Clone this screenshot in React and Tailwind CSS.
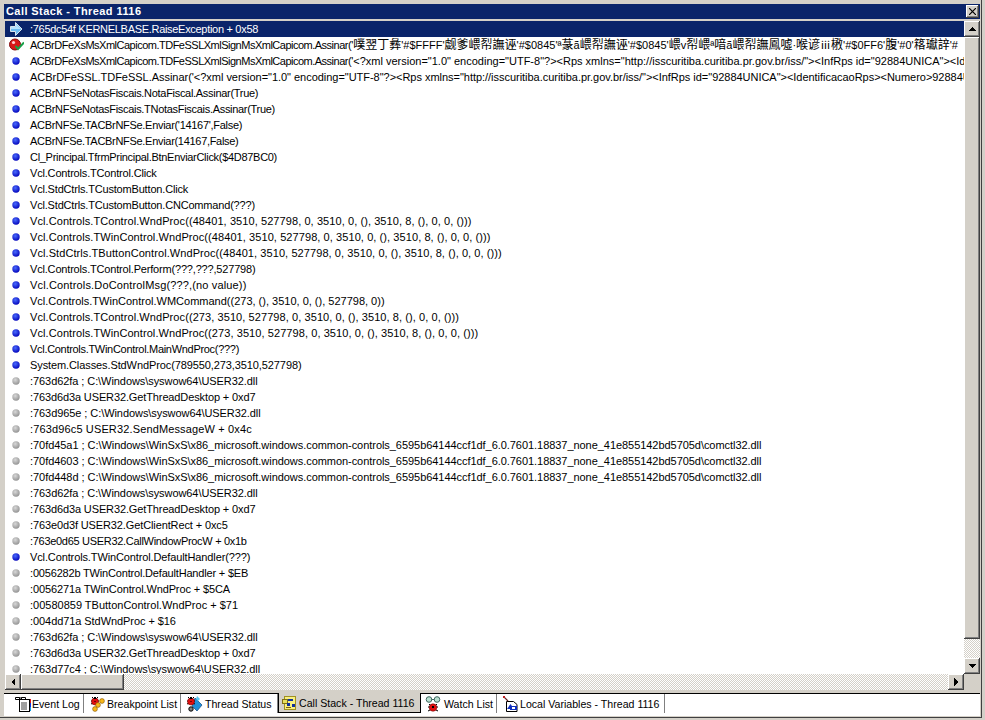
import React from 'react';

const WINSXS = 'C:\\Windows\\WinSxS\\x86_microsoft.windows.common-controls_6595b64144ccf1df_6.0.7601.18837_none_41e855142bd5705d\\comctl32.dll';
const XML = `<?xml version="1.0" encoding="UTF-8"?><Rps xmlns="http://isscuritiba.curitiba.pr.gov.br/iss/"><InfRps id="92884UNICA">`;
const SIGN = "ACBrDFeXsMsXmlCapicom.TDFeSSLXmlSignMsXmlCapicom.Assinar('";

// Tahoma is tighter on capitals and wider on digits than Liberation Sans, so rows get a small spacing fix
const tight = 'tracking-[-0.3px]';
const snug = 'tracking-[-0.18px]';
const loose = 'tracking-[0.08px]';

const rows = [
  ['arrow', ':765dc54f KERNELBASE.RaiseException + 0x58', tight],
  ['check', `'噗翌丁彝'#$FFFF'觑爹㟪㡂譕诬'#$0845'ª蒃ã㟪㡂譕诬'#$0845'㟪v㡂㟪ª喑ã㟪㡂譕鳳噓·喉谚ⅲ㮘'#$0FF6'腹'#0'䈷瓛䛨'#`, '', SIGN.slice(0, -1)],
  ['blue', `'${XML}<IdentificacaoRps>`, '', SIGN.slice(0, -1)],
  ['blue', `ACBrDFeSSL.TDFeSSL.Assinar('${XML}<IdentificacaoRps><Numero>92884UNICA</Numero>`, 'tracking-[-0.03px]'],
  ['blue', 'ACBrNFSeNotasFiscais.NotaFiscal.Assinar(True)', tight],
  ['blue', 'ACBrNFSeNotasFiscais.TNotasFiscais.Assinar(True)', tight],
  ['blue', "ACBrNFSe.TACBrNFSe.Enviar('14167',False)", tight],
  ['blue', 'ACBrNFSe.TACBrNFSe.Enviar(14167,False)', tight],
  ['blue', 'Cl_Principal.TfrmPrincipal.BtnEnviarClick($4D87BC0)', tight],
  ['blue', 'Vcl.Controls.TControl.Click', snug],
  ['blue', 'Vcl.StdCtrls.TCustomButton.Click', snug],
  ['blue', 'Vcl.StdCtrls.TCustomButton.CNCommand(???)', snug],
  ['blue', 'Vcl.Controls.TControl.WndProc((48401, 3510, 527798, 0, 3510, 0, (), 3510, 8, (), 0, 0, ()))', loose],
  ['blue', 'Vcl.Controls.TWinControl.WndProc((48401, 3510, 527798, 0, 3510, 0, (), 3510, 8, (), 0, 0, ()))', loose],
  ['blue', 'Vcl.StdCtrls.TButtonControl.WndProc((48401, 3510, 527798, 0, 3510, 0, (), 3510, 8, (), 0, 0, ()))', loose],
  ['blue', 'Vcl.Controls.TControl.Perform(???,???,527798)', snug],
  ['blue', 'Vcl.Controls.DoControlMsg(???,(no value))', 'tracking-[0.15px]'],
  ['blue', 'Vcl.Controls.TWinControl.WMCommand((273, (), 3510, 0, (), 527798, 0))', ''],
  ['blue', 'Vcl.Controls.TControl.WndProc((273, 3510, 527798, 0, 3510, 0, (), 3510, 8, (), 0, 0, ()))', loose],
  ['blue', 'Vcl.Controls.TWinControl.WndProc((273, 3510, 527798, 0, 3510, 0, (), 3510, 8, (), 0, 0, ()))', loose],
  ['blue', 'Vcl.Controls.TWinControl.MainWndProc(???)', tight],
  ['blue', 'System.Classes.StdWndProc(789550,273,3510,527798)', 'tracking-[-0.1px]'],
  ['gray', ':763d62fa ; C:\\Windows\\syswow64\\USER32.dll', 'tracking-[-0.07px]'],
  ['gray', ':763d6d3a USER32.GetThreadDesktop + 0xd7', 'tracking-[-0.12px]'],
  ['gray', ':763d965e ; C:\\Windows\\syswow64\\USER32.dll', 'tracking-[-0.07px]'],
  ['gray', ':763d96c5 USER32.SendMessageW + 0x4c', 'tracking-[0.14px]'],
  ['gray', `:70fd45a1 ; ${WINSXS}`, 'tracking-[-0.05px]'],
  ['gray', `:70fd4603 ; ${WINSXS}`, 'tracking-[-0.05px]'],
  ['gray', `:70fd448d ; ${WINSXS}`, 'tracking-[-0.05px]'],
  ['gray', ':763d62fa ; C:\\Windows\\syswow64\\USER32.dll', 'tracking-[-0.07px]'],
  ['gray', ':763d6d3a USER32.GetThreadDesktop + 0xd7', 'tracking-[-0.12px]'],
  ['gray', ':763e0d3f USER32.GetClientRect + 0xc5', 'tracking-[-0.12px]'],
  ['gray', ':763e0d65 USER32.CallWindowProcW + 0x1b', tight],
  ['blue', 'Vcl.Controls.TWinControl.DefaultHandler(???)', 'tracking-[-0.12px]'],
  ['gray', ':0056282b TWinControl.DefaultHandler + $EB', snug],
  ['gray', ':0056271a TWinControl.WndProc + $5CA', 'tracking-[-0.12px]'],
  ['gray', ':00580859 TButtonControl.WndProc + $71', ''],
  ['gray', ':004dd71a StdWndProc + $16', 'tracking-[-0.07px]'],
  ['gray', ':763d62fa ; C:\\Windows\\syswow64\\USER32.dll', 'tracking-[-0.07px]'],
  ['gray', ':763d6d3a USER32.GetThreadDesktop + 0xd7', 'tracking-[-0.12px]'],
  ['gray', ':763d77c4 ; C:\\Windows\\syswow64\\USER32.dll', 'tracking-[-0.07px]'],
];

const tabs = [
  { label: 'Event Log', icon: 'log', box: 'w-[80px] pl-[11px] gap-[1px]' },
  { label: 'Breakpoint List', icon: 'breakpoint', box: 'w-[97px] pl-[5px] gap-[2px]' },
  { label: 'Thread Status', icon: 'thread', box: 'w-[97px] pl-[6px] gap-[2px]' },
  { label: 'Call Stack - Thread 1116', icon: 'stack', box: 'w-[143px] pl-[3px] gap-[1px]', active: true },
  { label: 'Watch List', icon: 'watch', box: 'w-[76px] pl-[4px] gap-[3px]' },
  { label: 'Local Variables - Thread 1116', icon: 'locals', box: 'w-[168px] pl-[6px] gap-[1px]' },
];

const raised = 'bg-[#d4d0c8] shadow-[inset_-1px_-1px_0_#404040,inset_1px_1px_0_#ffffff,inset_-2px_-2px_0_#808080]';
const dither = 'bg-[repeating-conic-gradient(#d4d0c8_0_25%,#ffffff_0_50%)] bg-[length:2px_2px]';

function RowIcon({ type }) {
  if (type === 'arrow') {
    return (
      <svg width="16" height="16" viewBox="0 0 16 16">
        <path d="M2.5 5.5h5v-4l6.500 6.500-6.500 6.500v-4h-5z" fill="#6cbcf4" stroke="#d8e4ee" />
        <path d="M3 6h5v-3l5 5h-10z" fill="#b4e2ff" />
      </svg>
    );
  }
  if (type === 'check') {
    return (
      <svg width="16" height="16" viewBox="0 0 16 16">
        <circle cx="7" cy="7.500" r="5.500" fill="#d81818" stroke="#801010" />
        <circle cx="5.500" cy="5.500" r="1.600" fill="#ffd0d0" />
        <path d="M7.500 9l2.500 3 6-6.500" fill="none" stroke="#18a048" strokeWidth="2" />
      </svg>
    );
  }
  const fill = type === 'blue' ? 'url(#blueDot)' : 'url(#grayDot)';
  return (
    <svg width="16" height="16" viewBox="0 0 16 16">
      <defs>
        <radialGradient id="blueDot" cx="0.4" cy="0.35" r="0.7">
          <stop offset="0" stopColor="#4a6cff" />
          <stop offset="1" stopColor="#0000b8" />
        </radialGradient>
        <radialGradient id="grayDot" cx="0.4" cy="0.35" r="0.7">
          <stop offset="0" stopColor="#d8d8d8" />
          <stop offset="1" stopColor="#909090" />
        </radialGradient>
      </defs>
      <circle cx="8" cy="8" r="3.700" fill={fill} />
    </svg>
  );
}

function Bug({ x = 0, y = 0 }) {
  return (
    <g transform={`translate(${x} ${y})`}>
      <path d="M1 1l2 2M7 1l-2 2M0 5h8M0 8l2-1M8 8l-2-1" stroke="#000" strokeWidth="1" />
      <circle cx="4" cy="5.500" r="3.500" fill="#e01010" stroke="#600" strokeWidth="0.5" />
      <rect x="3" y="1" width="2" height="2" fill="#000" />
      <rect x="3.500" y="5" width="1" height="1" fill="#000" />
    </g>
  );
}

function TabIcon({ type }) {
  if (type === 'log') {
    return (
      <svg width="16" height="16" viewBox="0 0 16 16">
        <rect x="4.500" y="3.500" width="10" height="12" fill="#fff" stroke="#000" />
        <path d="M6 7h6M6 9h6M6 11h6M6 13h6" stroke="#404040" />
        <path d="M0.500 1.500h4v2h-4zM6.500 1.500h4v2h-4zM4 2h3" fill="none" stroke="#000" />
        <rect x="15" y="3" width="1" height="4" fill="#e01010" />
        <rect x="15" y="7" width="1" height="4" fill="#1030e0" />
        <rect x="15" y="11" width="1" height="4" fill="#10a0e0" />
      </svg>
    );
  }
  if (type === 'breakpoint') {
    return (
      <svg width="16" height="16" viewBox="0 0 16 16">
        <Bug x={2} y={0} />
        <circle cx="13" cy="5" r="2.400" fill="#f8b818" stroke="#805000" strokeWidth="0.6" />
        <circle cx="9" cy="9" r="2.400" fill="#f8b818" stroke="#805000" strokeWidth="0.6" />
        <circle cx="6" cy="13" r="2.400" fill="#f8b818" stroke="#805000" strokeWidth="0.6" />
      </svg>
    );
  }
  if (type === 'thread') {
    return (
      <svg width="16" height="16" viewBox="0 0 16 16">
        <path d="M8 2l7 7-5 6-5-5z" fill="#2090d8" stroke="#104880" strokeWidth="0.7" />
        <path d="M10 0l3 3-2 2-2-2z" fill="#58c8f0" />
        <Bug x={0} y={0} />
        <circle cx="4" cy="13" r="2.200" fill="#808080" stroke="#000" />
      </svg>
    );
  }
  if (type === 'stack') {
    return (
      <svg width="16" height="16" viewBox="0 0 16 16">
        <rect x="2.500" y="1.500" width="11" height="13" fill="#f8f080" stroke="#a09020" />
        <rect x="0.500" y="4.500" width="5" height="4" fill="#e8e060" stroke="#807010" />
        <rect x="6" y="4" width="5" height="2" fill="#1030a0" />
        <rect x="5" y="8" width="3" height="3" fill="#1030a0" />
        <rect x="10" y="9" width="3" height="3" fill="#1030a0" />
        <rect x="4" y="12" width="5" height="1" fill="#806010" />
      </svg>
    );
  }
  if (type === 'watch') {
    return (
      <svg width="16" height="16" viewBox="0 0 16 16">
        <circle cx="4" cy="3.500" r="2.800" fill="#b8e0d0" stroke="#406860" />
        <circle cx="12" cy="3.500" r="2.800" fill="#b8e0d0" stroke="#406860" />
        <path d="M6.500 3.500h3" stroke="#406860" />
        <path d="M4 8l2 2M12 8l-2 2M3 11h10M3 15l2-1M13 15l-2-1" stroke="#000" />
        <circle cx="8" cy="11.500" r="3.800" fill="#e01010" stroke="#600" strokeWidth="0.5" />
        <rect x="7" y="10" width="2" height="2" fill="#000" />
      </svg>
    );
  }
  return (
    <svg width="16" height="16" viewBox="0 0 16 16">
      <path d="M3.500 5.500h7l3.500 3v7h-10.500z" fill="#fff" stroke="#000" />
      <path d="M0 0l5 5" stroke="#602020" strokeWidth="1.2" />
      <rect x="0" y="0" width="2" height="2" fill="#c02020" />
      <path d="M4 13l3.500-5 3.500 5z" fill="#1030c0" />
      <rect x="7" y="10" width="7" height="4" fill="#1030c0" />
      <rect x="9" y="11" width="3" height="2" fill="#fff" />
    </svg>
  );
}

function Triangle({ dir }) {
  const points = {
    up: '4,0 0,4 8,4',
    down: '0,0 8,0 4,4',
    left: '4,0 4,8 0,4',
    right: '0,0 4,4 0,8',
  }[dir];
  const size = dir === 'up' || dir === 'down' ? { width: 8, height: 4 } : { width: 4, height: 8 };
  return (
    <svg {...size} viewBox={`0 0 ${size.width} ${size.height}`} shapeRendering="crispEdges">
      <polygon points={points} fill="#000" />
    </svg>
  );
}

function ScrollButton({ dir }) {
  return (
    <div className={`w-4 h-4 shrink-0 flex items-center justify-center ${raised}`}>
      <Triangle dir={dir} />
    </div>
  );
}

// the garbled CJK runs were drawn 12px wide in the original
function RowText({ text }) {
  return text.split(/([\u3400-\u9fff]+)/).map((part, i) =>
    i % 2 === 1 ? <span key={i} className="text-[12px]">{part}</span> : part
  );
}

export default function App() {
  return (
    <div className="w-[985px] h-[720px] overflow-hidden bg-[#d4d0c8] pr-[3px] pb-[2px] text-[11px] leading-4 text-black font-['Liberation_Sans','Noto_Sans_CJK_SC',sans-serif]">
      <div className="h-full flex flex-col bg-[#d4d0c8] border-r border-b border-[#404040] pl-1 pt-1 pr-[1px] pb-[1px]">
        {/* Title bar */}
        <div className="h-[15px] shrink-0 flex items-center justify-between bg-[#0a246a] pl-[2px] pr-[1px]">
          <span className="font-bold text-white leading-[15px] tracking-[0.42px]">Call Stack - Thread 1116</span>
          <div className={`w-[13px] h-[13px] flex items-center justify-center ${raised}`}>
            <svg width="7" height="7" viewBox="0 0 7 7">
              <path d="M0 0l7 7M7 0l-7 7" stroke="#000" strokeWidth="1.2" />
            </svg>
          </div>
        </div>

        {/* List and scrollbars */}
        <div className="mt-[2px] flex-1 min-h-0 flex flex-col pl-[1px]">
          <div className="flex-1 min-h-0 flex">
            <div className="flex-1 min-w-0 overflow-hidden bg-white">
              {rows.map(([icon, text, spacing, prefix], i) => (
                <div
                  key={i}
                  className={`h-4 flex items-center whitespace-nowrap ${i === 0 ? 'bg-[#0a246a] text-white' : ''}`}
                >
                  <div className="w-[25px] shrink-0 pl-[3px]">
                    <RowIcon type={icon} />
                  </div>
                  <span className={spacing}>
                    {prefix && <span className="tracking-[-0.5px]">{prefix}</span>}
                    <RowText text={text} />
                  </span>
                </div>
              ))}
            </div>
            <div className="w-4 shrink-0 flex flex-col">
              <ScrollButton dir="up" />
              <div className={`h-[602px] shrink-0 ${raised}`} />
              <div className={`flex-1 ${dither}`} />
              <ScrollButton dir="down" />
            </div>
          </div>
          <div className="h-4 shrink-0 flex">
            <ScrollButton dir="left" />
            <div className={`w-[103px] shrink-0 ${raised}`} />
            <div className={`flex-1 ${dither}`} />
            <ScrollButton dir="right" />
            <div className="w-4 shrink-0" />
          </div>
        </div>

        {/* Tabs */}
        <div className="mt-[3px] h-[23px] shrink-0 flex items-start bg-white border-t border-black">
          {tabs.map((tab) => (
            <div
              key={tab.label}
              className={`flex items-center whitespace-nowrap text-[10.6px] ${tab.box} ${
                tab.active
                  ? 'bg-[#d4d0c8] -mt-px h-[20px] border-b border-r border-l border-black'
                  : 'h-[19px] border-r border-[#808080]'
              }`}
            >
              <TabIcon type={tab.icon} />
              <span>{tab.label}</span>
            </div>
          ))}
        </div>
      </div>
    </div>
  );
}
